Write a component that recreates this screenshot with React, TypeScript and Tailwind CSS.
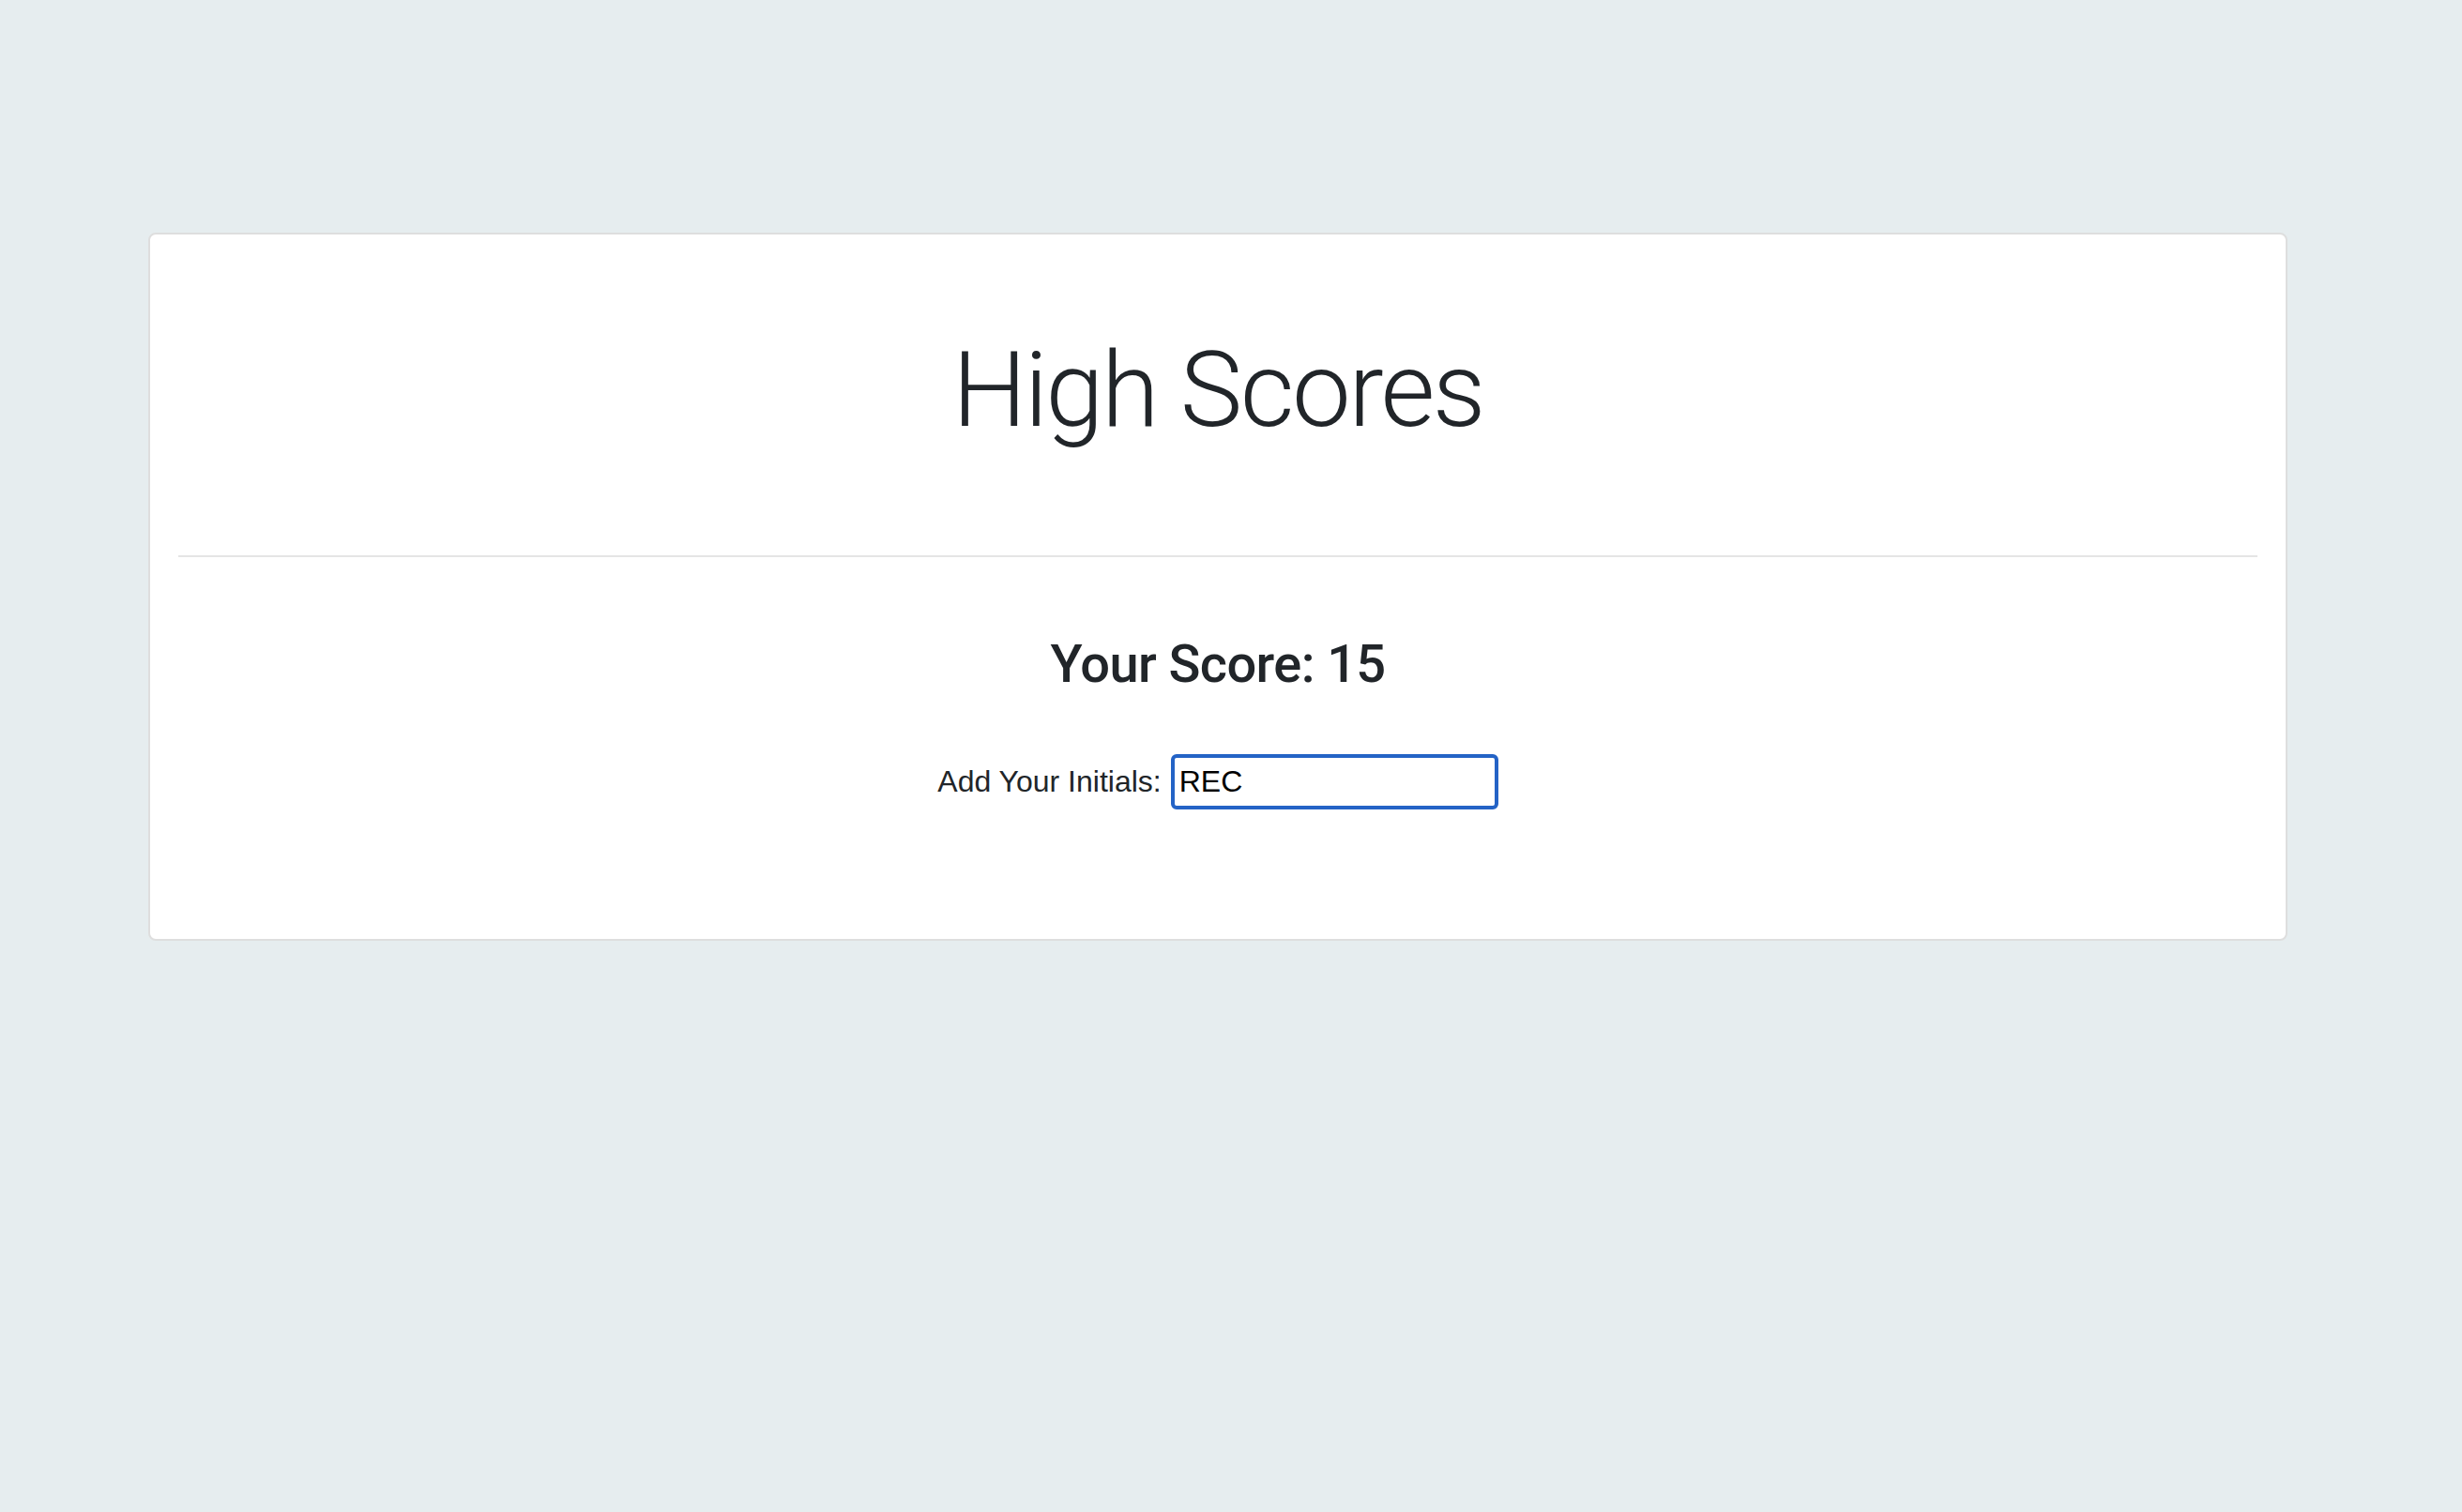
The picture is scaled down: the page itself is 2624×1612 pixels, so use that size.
import React, { useState } from "react";

const App = () => {
  const [initials, setInitials] = useState("REC");

  return (
    <div className="min-h-screen bg-[#e6edef] pt-[248px] font-['Liberation_Sans',Arial,sans-serif] text-[#212529]">
      {/* Card */}
      <div className="ml-[158px] w-[2280px] bg-white border-2 border-[#dedede] rounded-[8px] px-[30px] pt-[99px] pb-[138px]">
        <h1 className="text-center text-[112px] leading-[134px] font-light tracking-[-2.5px] font-['Roboto',sans-serif]">
          High Scores
        </h1>
        <hr className="mt-[109px] border-0 border-t-2 border-[#e5e5e5]" />

        <h3 className="mt-[81px] text-center text-[56px] leading-[67px] font-medium tracking-[-0.6px] font-['Roboto',sans-serif]">
          Your Score: 15
        </h3>

        {/* Initials form */}
        <div className="mt-[62px] flex items-center justify-center gap-[10px]">
          <label htmlFor="initials" className="text-[32px] leading-[59px]">
            Add Your Initials:
          </label>
          <input
            id="initials"
            type="text"
            value={initials}
            onChange={(e) => setInitials(e.target.value)}
            className="w-[349px] h-[59px] border-4 border-[#2463c6] rounded-[6px] px-[5px] text-[32px] text-black outline-none bg-white font-['Liberation_Sans',Arial,sans-serif]"
          />
        </div>
      </div>
    </div>
  );
};

export default App;
